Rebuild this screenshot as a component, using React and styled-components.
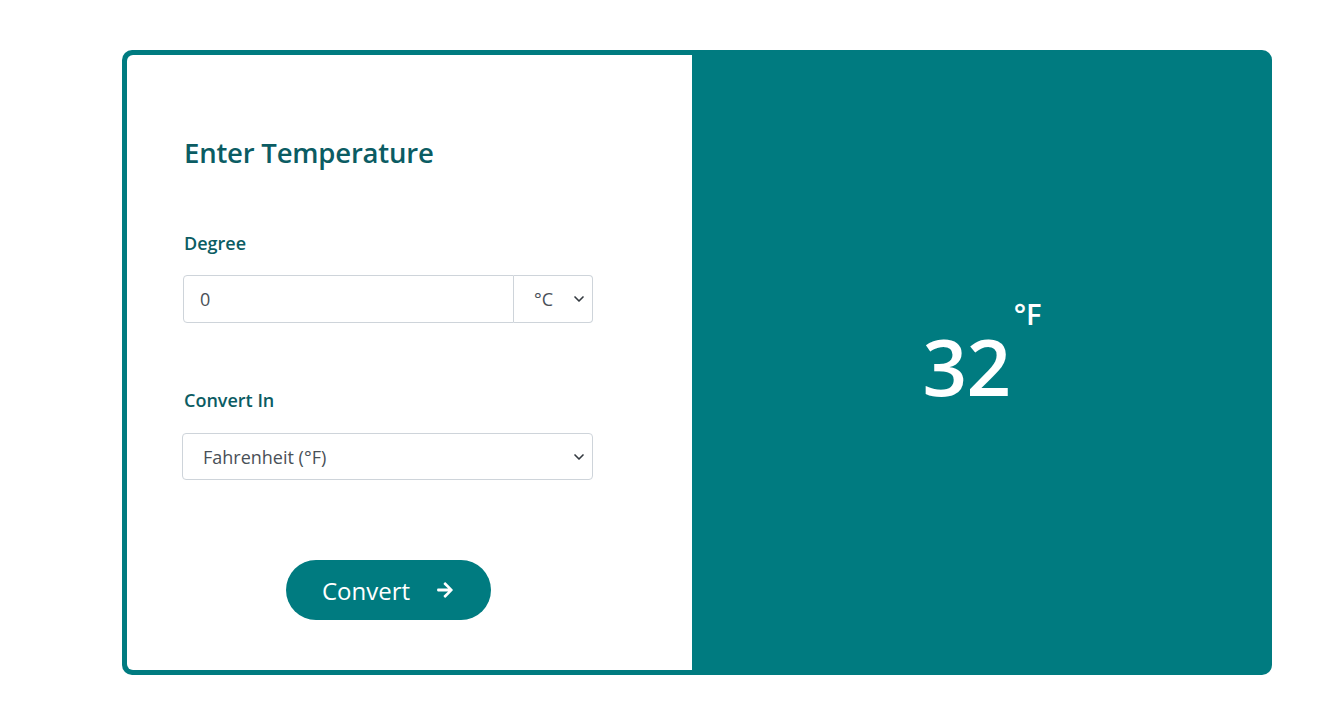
import React, { Component } from 'react';
import styled, { createGlobalStyle } from 'styled-components';
import { FaArrowRight } from 'react-icons/fa';
import { ChevronDown } from 'lucide-react';

const teal = '#007b80';
const ink = '#0b5c63';

const GlobalStyle = createGlobalStyle`
  body {
    margin: 0;
    background: #fff;
    font-family: 'Open Sans', 'Noto Sans', sans-serif;
  }
`;

const Page = styled.div`
  padding: 50px 62px 39px 122px;
`;

const Card = styled.div`
  display: grid;
  grid-template-columns: 570px 1fr;
  height: 625px;
  border-radius: 10px;
  background: ${teal};
  overflow: hidden;
`;

const FormPanel = styled.div`
  margin: 5px 0 5px 5px;
  background: #fff;
  border-radius: 6px 0 0 6px;
  padding: 79px 0 0 56px;
  display: flex;
  flex-direction: column;
`;

const Title = styled.h2`
  margin: 0 0 60px 1px;
  font-size: 27.5px;
  font-weight: 600;
  color: ${ink};
  letter-spacing: -0.2px;
`;

const Label = styled.label`
  display: block;
  margin: 0 0 ${(p) => p.gap}px 1px;
  font-size: 18px;
  font-weight: 600;
  color: ${ink};
`;

const Field = styled.div`
  width: ${(p) => p.width}px;
  margin-left: ${(p) => p.shift || 0}px;
  margin-bottom: ${(p) => p.after}px;
  display: flex;
  height: ${(p) => p.height}px;
`;

const Input = styled.input`
  flex: 1;
  min-width: 0;
  border: 1px solid #ced4da;
  border-radius: 4px 0 0 4px;
  padding: 0 16px;
  font: inherit;
  font-size: 18px;
  color: #495057;
  outline: none;
`;

const SelectWrap = styled.div`
  position: relative;
  width: ${(p) => (p.width ? `${p.width}px` : '100%')};
  display: flex;
`;

const Select = styled.select`
  appearance: none;
  width: 100%;
  border: 1px solid #ced4da;
  border-left-width: ${(p) => (p.joined ? 0 : 1)}px;
  border-radius: ${(p) => (p.joined ? '0 4px 4px 0' : '4px')};
  padding: 0 20px;
  font: inherit;
  font-size: 18px;
  color: #495057;
  background: #fff;
  outline: none;
`;

const Chevron = styled(ChevronDown)`
  position: absolute;
  right: 6px;
  top: 50%;
  transform: translateY(-50%);
  pointer-events: none;
  color: #343a40;
`;

const ButtonRow = styled.div`
  width: 410px;
  display: flex;
  justify-content: center;
`;

const ConvertButton = styled.button`
  width: 205px;
  height: 60px;
  border: none;
  border-radius: 30px;
  background: ${teal};
  color: #fff;
  font: inherit;
  font-size: 24px;
  display: flex;
  align-items: center;
  justify-content: center;
  gap: 26px;
  padding: 0;
  cursor: pointer;
`;

const ResultPanel = styled.div`
  display: flex;
  align-items: center;
  justify-content: center;
  color: #fff;
  padding-top: 6px;
`;

const Reading = styled.div`
  display: flex;
  align-items: flex-start;
`;

const Value = styled.span`
  font-size: 78px;
  font-weight: 600;
  line-height: 1;
  letter-spacing: -0.5px;
`;

const Unit = styled.sup`
  font-size: 29px;
  font-weight: 600;
  line-height: 1;
  margin: -28px 0 0 3px;
`;

export default class App extends Component {
  constructor(props) {
    super(props);
    this.state = { degree: '0', from: 'C', to: 'F' };
  }

  render() {
    return (
      <Page>
        <GlobalStyle />
        <Card>
          <FormPanel>
            <Title>Enter Temperature</Title>
            <Label gap={20}>Degree</Label>
            <Field width={410} height={48} after={65}>
              <Input
                value={this.state.degree}
                onChange={(e) => this.setState({ degree: e.target.value })}
              />
              <SelectWrap width={79}>
                <Select joined value={this.state.from} onChange={(e) => this.setState({ from: e.target.value })}>
                  <option value="C">°C</option>
                  <option value="F">°F</option>
                  <option value="K">K</option>
                </Select>
                <Chevron size={16} strokeWidth={2.5} />
              </SelectWrap>
            </Field>
            <Label gap={21}>Convert In</Label>
            <Field width={411} height={47} after={80} shift={-1}>
              <SelectWrap>
                <Select value={this.state.to} onChange={(e) => this.setState({ to: e.target.value })}>
                  <option value="F">Fahrenheit (°F)</option>
                  <option value="C">Celsius (°C)</option>
                  <option value="K">Kelvin (K)</option>
                </Select>
                <Chevron size={16} strokeWidth={2.5} />
              </SelectWrap>
            </Field>
            <ButtonRow>
              <ConvertButton>
                Convert
                <FaArrowRight size={18} />
              </ConvertButton>
            </ButtonRow>
          </FormPanel>
          <ResultPanel>
            <Reading>
              <Value>32</Value>
              <Unit>°F</Unit>
            </Reading>
          </ResultPanel>
        </Card>
      </Page>
    );
  }
}
